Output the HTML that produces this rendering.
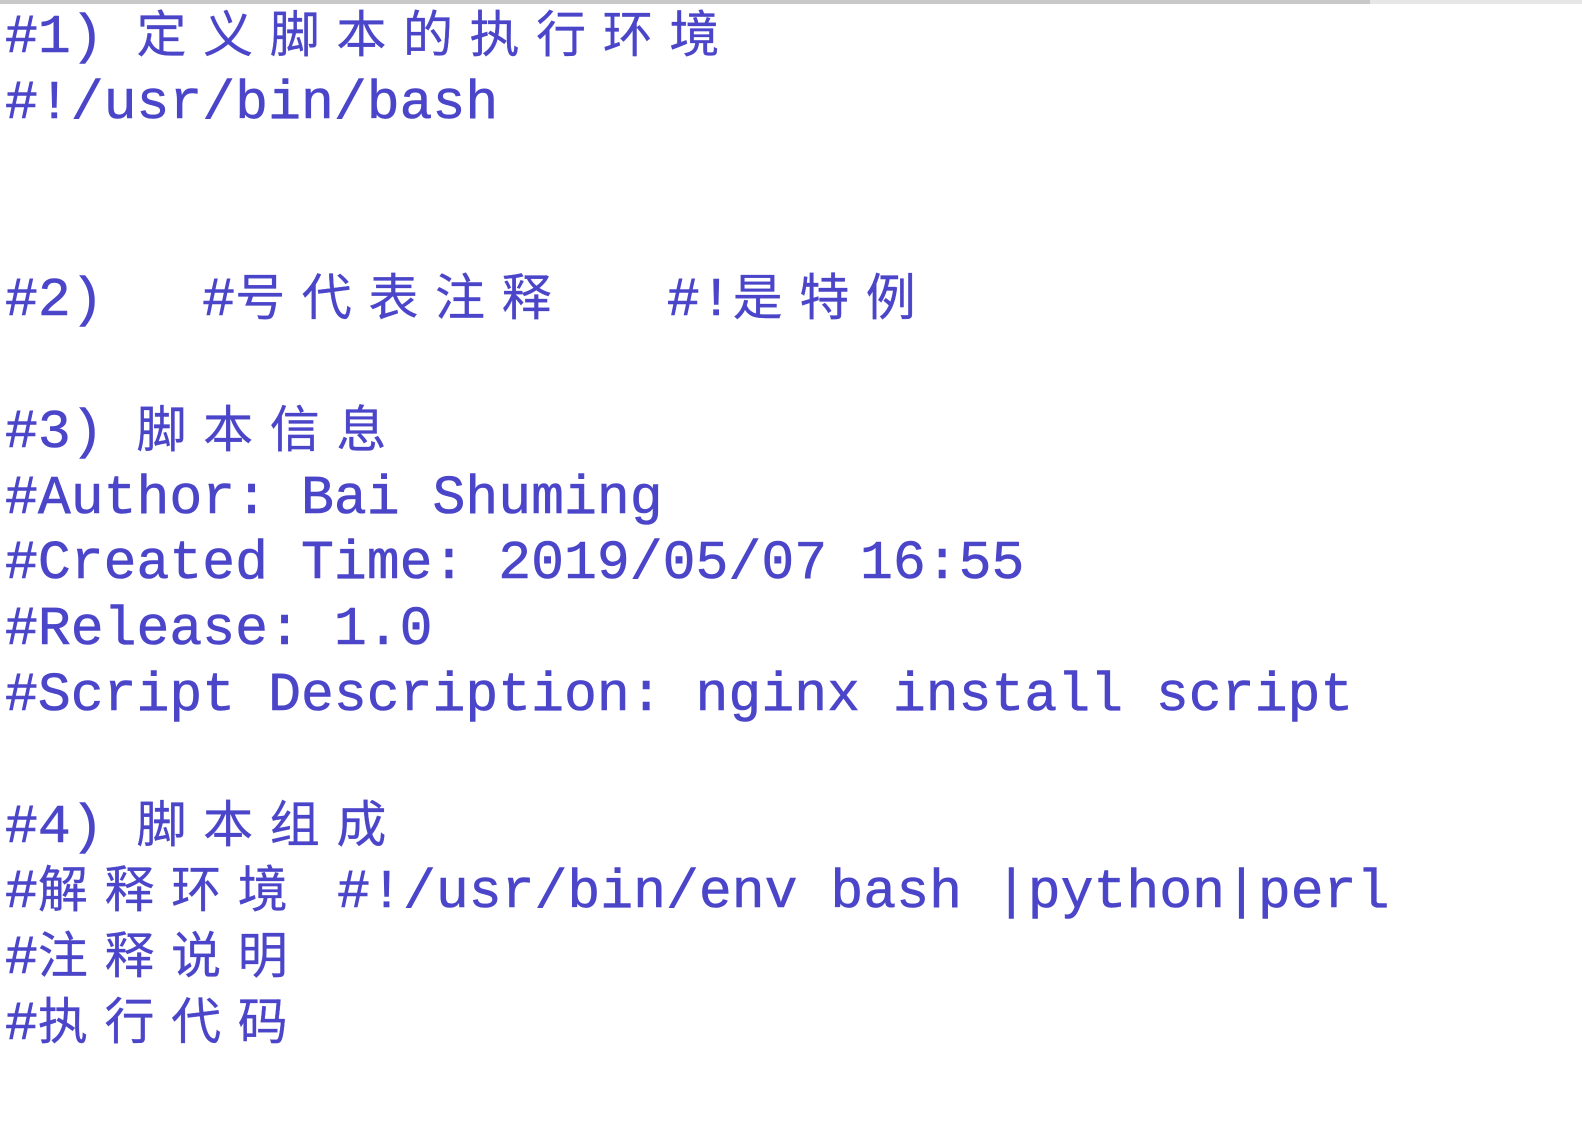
<!DOCTYPE html>
<html><head><meta charset="utf-8"><style>
html,body{margin:0;padding:0;background:#fff;width:1582px;height:1138px;overflow:hidden}
.bar{position:absolute;top:0;left:0;width:1370px;height:4px;background:#c8c8c8}
.bar2{position:absolute;top:0;left:1370px;width:212px;height:4px;background:#e6e6e6}
.t{position:absolute;top:6px;left:5px;margin:0;font-family:"Liberation Mono","Noto Sans CJK SC",monospace;font-size:54.8px;color:#4b45c9;-webkit-text-stroke:0.6px #4b45c9}
.t div{height:65.8px;line-height:65.8px;white-space:pre;overflow:visible}
.c{font-family:"Noto Sans CJK SC",sans-serif;font-size:50px;line-height:1;letter-spacing:16.6px;-webkit-text-stroke:0.3px #4b45c9}
</style></head><body>
<div class="bar"></div><div class="bar2"></div>
<div class="t">
<div>#1) <span class="c">定义脚本的执行环境</span></div>
<div>#!/usr/bin/bash</div>
<div> </div>
<div> </div>
<div>#2)   #<span class="c">号代表注释</span>   #!<span class="c">是特例</span></div>
<div> </div>
<div>#3) <span class="c">脚本信息</span></div>
<div>#Author: Bai Shuming</div>
<div>#Created Time: 2019/05/07 16:55</div>
<div>#Release: 1.0</div>
<div>#Script Description: nginx install script</div>
<div> </div>
<div>#4) <span class="c">脚本组成</span></div>
<div>#<span class="c">解释环境</span> #!/usr/bin/env bash |python|perl</div>
<div>#<span class="c">注释说明</span></div>
<div>#<span class="c">执行代码</span></div>
</div>
</body></html>
